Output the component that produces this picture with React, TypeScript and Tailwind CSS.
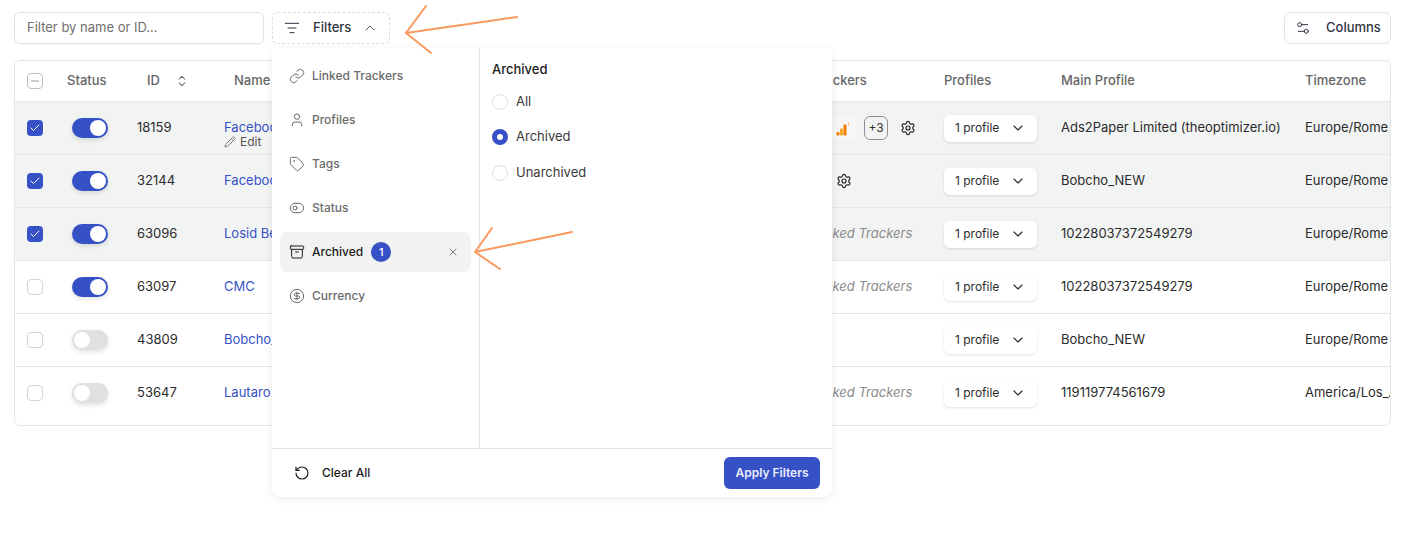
import {
  Archive,
  Check,
  ChevronDown,
  ChevronUp,
  ChevronsUpDown,
  CircleDollarSign,
  Link,
  ListFilter,
  Minus,
  Pencil,
  RotateCcw,
  Settings,
  Settings2,
  Tag,
  ToggleLeft,
  User,
  X,
} from 'lucide-react';
import type { ReactNode } from 'react';

type Row = {
  id: string;
  name: string;
  active: boolean;
  selected: boolean;
  edit?: boolean;
  trackers: ReactNode;
  mainProfile: string;
  timezone: string;
};

const COLS = 'grid grid-cols-[52px_70px_87px_544px_176px_117px_244px_86px]';

function AnalyticsIcon() {
  return (
    <span className="flex h-6 w-6 items-center justify-center rounded-md bg-[#f6f6f6]">
      <svg width="16" height="16" viewBox="0 0 16 16">
        <rect x="1.5" y="12" width="3" height="3.5" rx="1" fill="#f57c00" />
        <rect x="5" y="8.5" width="3" height="7" rx="1" fill="#f9a825" />
        <rect x="8.5" y="4.5" width="3" height="11" rx="1" fill="#f57c00" />
        <rect x="13" y="2.5" width="1.2" height="3" rx="0.5" fill="#fbb98a" />
      </svg>
    </span>
  );
}

function NoTrackers() {
  return <span className="pl-[25px] italic text-[#8a8a8a]">No Linked Trackers</span>;
}

const rows: Row[] = [
  {
    id: '18159',
    name: 'Facebook Ads',
    active: true,
    selected: true,
    edit: true,
    mainProfile: 'Ads2Paper Limited (theoptimizer.io)',
    timezone: 'Europe/Rome',
    trackers: (
      <div className="flex items-center pl-[63px]">
        <AnalyticsIcon />
        <span className="ml-[9px] flex h-6 w-6 items-center justify-center rounded-md border border-[#8f8f8f] text-[12px] text-[#333]">
          +3
        </span>
        <Settings className="ml-3 h-4 w-4 text-[#222]" strokeWidth={1.75} />
      </div>
    ),
  },
  {
    id: '32144',
    name: 'Facebook Ads',
    active: true,
    selected: true,
    mainProfile: 'Bobcho_NEW',
    timezone: 'Europe/Rome',
    trackers: <Settings className="ml-[68px] h-4 w-4 text-[#222]" strokeWidth={1.75} />,
  },
  {
    id: '63096',
    name: 'Losid Bet',
    active: true,
    selected: true,
    mainProfile: '10228037372549279',
    timezone: 'Europe/Rome',
    trackers: <NoTrackers />,
  },
  {
    id: '63097',
    name: 'CMC',
    active: true,
    selected: false,
    mainProfile: '10228037372549279',
    timezone: 'Europe/Rome',
    trackers: <NoTrackers />,
  },
  {
    id: '43809',
    name: 'Bobcho_NEW',
    active: false,
    selected: false,
    mainProfile: 'Bobcho_NEW',
    timezone: 'Europe/Rome',
    trackers: null,
  },
  {
    id: '53647',
    name: 'Lautaro Ads',
    active: false,
    selected: false,
    mainProfile: '119119774561679',
    timezone: 'America/Los_Angeles',
    trackers: <NoTrackers />,
  },
];

const filterItems = [
  { label: 'Linked Trackers', icon: Link },
  { label: 'Profiles', icon: User },
  { label: 'Tags', icon: Tag },
  { label: 'Status', icon: ToggleLeft },
  { label: 'Archived', icon: Archive, count: 1 },
  { label: 'Currency', icon: CircleDollarSign },
];

function Checkbox({ checked }: { checked: boolean }) {
  if (checked) {
    return (
      <span className="flex h-4 w-4 items-center justify-center rounded-[4px] bg-[#3651c6]">
        <Check className="h-3 w-3 text-white" strokeWidth={2} />
      </span>
    );
  }
  return <span className="block h-4 w-4 rounded-[4px] border border-[#d4d4d4] bg-white" />;
}

function Toggle({ on }: { on: boolean }) {
  return (
    <span
      className={`ml-[5px] flex h-5 w-9 items-center rounded-full px-0.5 shadow-[0_2px_5px_rgba(0,0,0,0.12)] ${
        on ? 'justify-end bg-[#3651c6]' : 'justify-start bg-[#e0e0e0]'
      }`}
    >
      <span className="h-4 w-4 rounded-full bg-white" />
    </span>
  );
}

function Radio({ label, checked }: { label: string; checked?: boolean }) {
  return (
    <div className="flex h-4 items-center gap-2 text-[13px] text-[#3a3a3a]">
      {checked ? (
        <span className="flex h-4 w-4 items-center justify-center rounded-full bg-[#3651c6]">
          <span className="h-1.5 w-1.5 rounded-full bg-white" />
        </span>
      ) : (
        <span className="h-4 w-4 rounded-full border border-[#dedede] bg-white" />
      )}
      {label}
    </div>
  );
}

function FiltersPopover() {
  return (
    <div className="absolute left-[272px] top-12 z-10 flex h-[449px] w-[560px] flex-col rounded-b-lg bg-white shadow-[0_2px_8px_rgba(0,0,0,0.08)]">
      <div className="flex min-h-0 flex-1 border-b border-[#e2e2e2]">
        <div className="flex w-[208px] flex-col gap-1 border-r border-[#e2e2e2] px-2 pt-2">
          {filterItems.map(({ label, icon: Icon, count }) => (
            <div
              key={label}
              className={`flex h-10 items-center rounded-lg px-[9px] text-[12px] font-medium ${
                count ? 'bg-[#f2f2f2] text-[#1c1c1c]' : 'text-[#6b6b6b]'
              }`}
            >
              <Icon className="h-4 w-4 shrink-0" strokeWidth={1.5} />
              <span className="ml-[7px]">{label}</span>
              {count && (
                <>
                  <span className="ml-2 flex h-5 w-5 items-center justify-center rounded-full bg-[#3651c6] text-[11px] text-white">
                    {count}
                  </span>
                  <X className="ml-auto mr-[3px] h-3 w-3 text-[#555]" strokeWidth={1.5} />
                </>
              )}
            </div>
          ))}
        </div>
        <div className="flex-1 px-3 pt-[13px]">
          <div className="text-[13px] font-medium leading-4 text-[#1c1c1c]">Archived</div>
          <div className="mt-[16.6px] flex flex-col gap-[19.5px]">
            <Radio label="All" />
            <Radio label="Archived" checked />
            <Radio label="Unarchived" />
          </div>
        </div>
      </div>
      <div className="flex h-[48px] items-center justify-between pl-[22px] pr-3">
        <div className="flex items-center gap-3 text-[12px] font-medium text-[#1c1c1c]">
          <RotateCcw className="h-4 w-4" strokeWidth={1.75} />
          Clear All
        </div>
        <button className="h-8 w-[96px] rounded-md bg-[#3651c6] text-[12px] font-semibold text-[#e8ebfa]">
          Apply Filters
        </button>
      </div>
    </div>
  );
}

function Arrows() {
  return (
    <svg className="pointer-events-none absolute left-0 top-0 z-20" width="1416" height="549" fill="none">
      <g stroke="#f9995d" strokeWidth="2" strokeLinecap="round" strokeLinejoin="round">
        <path d="M517 17 L406 33 L426 6 M406 33 L431 53" />
        <path d="M572 232 L475 252 L492 228 M475 252 L500 269" />
      </g>
    </svg>
  );
}

export default function App() {
  return (
    <div className="relative h-[549px] w-[1416px] overflow-hidden bg-white pl-[14px] pr-[25px] pt-3 font-['Inter',sans-serif] text-[13px] text-[#2b2b2b]">
      <div className="flex items-center gap-2">
        <div className="flex h-8 w-[250px] items-center rounded-md border border-[#e3e3e3] bg-white px-3 text-[#6f6f6f] shadow-[0_1px_2px_rgba(0,0,0,0.04)]">
          Filter by name or ID...
        </div>
        <div className="flex h-8 w-[118px] items-center rounded-md border border-dashed border-[#dcdcdc] pl-[11px] text-[13px] font-medium text-[#2f3342]">
          <ListFilter className="h-4 w-4" strokeWidth={1.5} />
          <span className="ml-[13px]">Filters</span>
          <ChevronUp className="ml-[11px] h-4 w-4 text-[#555]" strokeWidth={1.5} />
        </div>
        <div className="ml-auto flex h-8 w-[107px] items-center rounded-md border border-[#e3e3e3] pl-[10px] text-[13px] font-medium text-[#2f3342]">
          <Settings2 className="h-4 w-4" strokeWidth={1.5} />
          <span className="ml-[15px]">Columns</span>
        </div>
      </div>

      <div className="mt-4 h-[366px] overflow-hidden rounded-md border border-[#e4e6e8]">
        <div className={`${COLS} h-[41px] items-center border-b border-[#e4e6e8] text-[#666]`}>
          <div className="pl-3">
            <span className="flex h-4 w-4 items-center justify-center rounded-[4px] border border-[#bdbdbd]">
              <Minus className="h-3 w-3 text-[#777]" strokeWidth={1.5} />
            </span>
          </div>
          <div className="font-medium">Status</div>
          <div className="flex items-center gap-[15px] pl-[10px] font-medium">
            ID
            <ChevronsUpDown className="h-[14px] w-[14px]" strokeWidth={1.75} />
          </div>
          <div className="pl-[10px] font-medium">Name</div>
          <div className="font-medium">Linked Trackers</div>
          <div className="font-medium">Profiles</div>
          <div className="font-medium">Main Profile</div>
          <div className="font-medium">Timezone</div>
        </div>
        {rows.map((row, i) => (
          <div
            key={row.id}
            className={`${COLS} h-[53px] items-center border-b ${i < rows.length - 1 ? 'border-[#e4e6e8]' : 'border-transparent'} ${
              row.selected ? 'bg-[#f2f3f3]' : 'bg-white'
            }`}
          >
            <div className="pl-3">
              <Checkbox checked={row.selected} />
            </div>
            <div>
              <Toggle on={row.active} />
            </div>
            <div>{row.id}</div>
            <div className="relative pb-[2px] leading-[14px]">
              <div className="text-[#3651c6]">{row.name}</div>
              {row.edit && (
                <div className="absolute left-0 top-[15px] flex items-center gap-1 text-[12px] text-[#555]">
                  <Pencil className="h-3 w-3" strokeWidth={1.5} />
                  Edit
                </div>
              )}
            </div>
            <div>{row.trackers}</div>
            <div>
              <div className="flex h-[27px] w-[93px] items-center justify-between rounded-md bg-white pl-[11px] pr-[11px] text-[12px] shadow-[0_1px_3px_rgba(0,0,0,0.12)]">
                1 profile
                <ChevronDown className="h-4 w-4" strokeWidth={1.75} />
              </div>
            </div>
            <div>{row.mainProfile}</div>
            <div className="overflow-hidden whitespace-nowrap">{row.timezone}</div>
          </div>
        ))}
      </div>

      <FiltersPopover />
      <Arrows />
    </div>
  );
}
